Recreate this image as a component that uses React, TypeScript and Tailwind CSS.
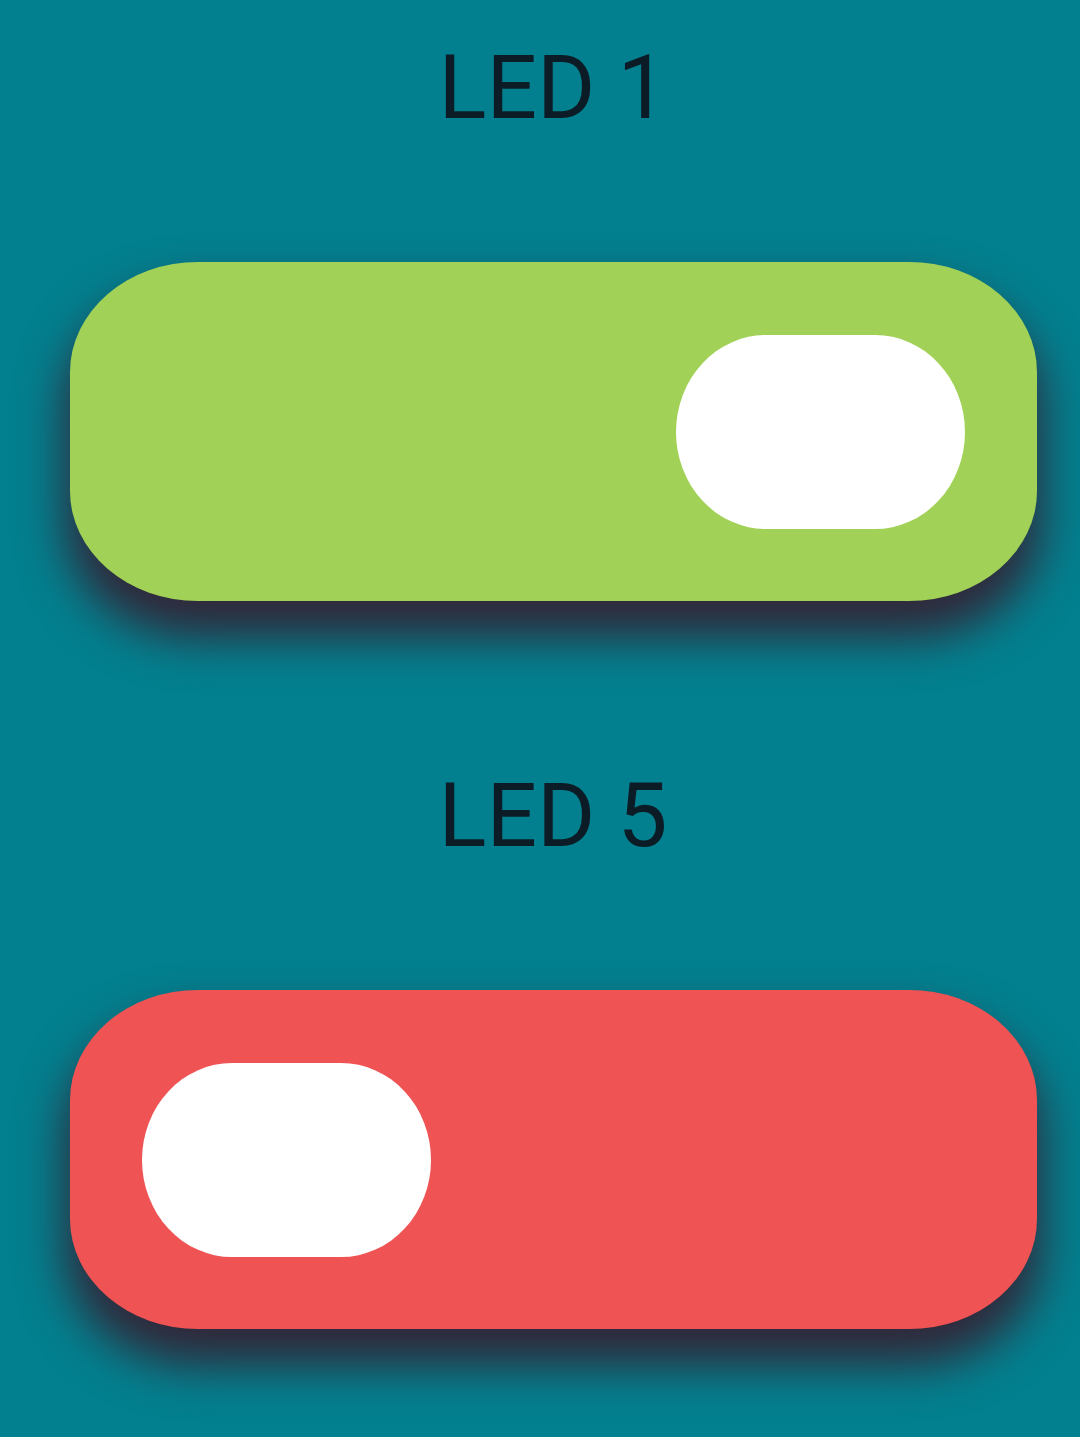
const LedToggle = ({ label, on }: { label: string; on: boolean }) => {
  return (
    <div className="flex flex-col">
      <h2 className="text-center text-[89px] leading-none font-normal text-[#0b1c26] pl-[26px]">{label}</h2>
      <div
        className={`mt-[130px] ml-[70px] w-[967px] h-[339px] rounded-[128px/110px] flex items-center px-[72px] shadow-[0_32px_48px_4px_rgba(50,38,56,1)] ${
          on ? 'bg-[#a1d156] justify-end' : 'bg-[#ef5354] justify-start'
        }`}
      >
        <div className="w-[289px] h-[194px] rounded-[90px/97px] bg-white" />
      </div>
    </div>
  )
}

const App = () => {
  return (
    <div className="w-[1080px] h-[1437px] overflow-hidden bg-[#03808f] pt-[43px] font-['Roboto',sans-serif]">
      <LedToggle label="LED 1" on={true} />
      <div className="h-[170px]" />
      <LedToggle label="LED 5" on={false} />
    </div>
  )
}

export default App
